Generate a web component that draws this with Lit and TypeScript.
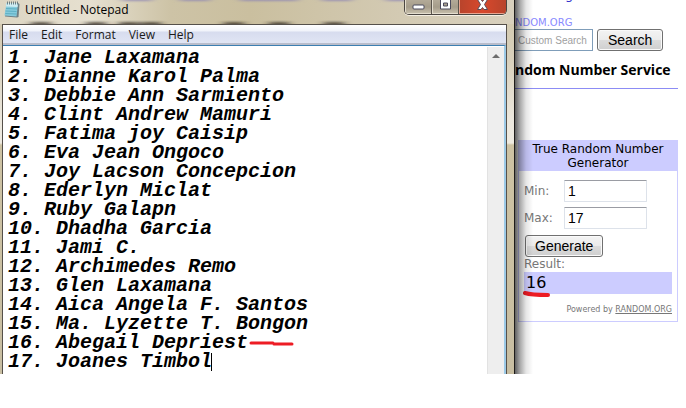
import { LitElement, html, css, svg } from "lit";
import { customElement, state } from "lit/decorators.js";

const NAMES = [
  "Jane Laxamana",
  "Dianne Karol Palma",
  "Debbie Ann Sarmiento",
  "Clint Andrew Mamuri",
  "Fatima joy Caisip",
  "Eva Jean Ongoco",
  "Joy Lacson Concepcion",
  "Ederlyn Miclat",
  "Ruby Galapn",
  "Dhadha Garcia",
  "Jami C.",
  "Archimedes Remo",
  "Glen Laxamana",
  "Aica Angela F. Santos",
  "Ma. Lyzette T. Bongon",
  "Abegail Depriest",
  "Joanes Timbol",
];

@customElement("notepad-window")
export class NotepadWindow extends LitElement {
  static styles = css`
    :host {
      display: block;
      position: relative;
      min-width: 0;
      padding: 0 7px 0 2px;
      background: linear-gradient(#d2c8ac, #d8d0bc 60px, #ece8de 120px, #eeeae0 143px, #cdc2a3 145px, #c8bea2);
      border-right: 1px solid #1e1c1a;
      font-family: "Open Sans", "Noto Sans", sans-serif;
      font-size: 12px;
      color: #000;
    }
    .titlebar {
      position: relative;
      display: flex;
      justify-content: space-between;
      height: 24px;
      margin: 0 -7px 0 -2px;
      overflow: hidden;
      background: linear-gradient(90deg, #ddd6c3, #e6e0d0 90px, #cdc3a6 170px, #cabf9f 250px, #d3cab3 400px, #d8d0bd);
    }
    .ghost {
      position: absolute;
      inset: 0;
      width: 100%;
      height: 24px;
    }
    .name {
      position: relative;
      display: flex;
      gap: 5px;
      padding: 0 4px;
      line-height: 20px;
    }
    .name svg {
      margin-top: 1px;
    }
    .caption {
      position: relative;
      display: flex;
      height: 14px;
      margin-right: 7px;
      border: 1px solid #4b4642;
      border-top: 0;
      border-radius: 0 0 5px 5px;
      box-shadow: 0 1px 0 #f3eee2;
      overflow: hidden;
    }
    .caption button {
      display: grid;
      place-items: center;
      width: 27px;
      height: 14px;
      margin: 0;
      padding: 0 0 4px;
      border: 0;
      border-right: 1px solid #5a544c;
      background: linear-gradient(#b3aa98, #a59c8a 7px, #c9c1ae);
      box-shadow: inset 1px -1px 0 #e4decf;
    }
    .caption .close {
      width: 47px;
      border-right: 0;
      background: linear-gradient(90deg, #b7442c, #d8482c, #b7442c);
      box-shadow: inset 1px -1px 0 #e9a691;
    }
    .client {
      border: 1px solid #55504a;
      border-bottom: 0;
    }
    .menu {
      display: flex;
      gap: 2px;
      height: 18px;
      border-bottom: 2px solid #b9bdcb;
      background: linear-gradient(#fff, #f0f3fa 6px, #d7dcee 7px, #e0e5f4);
    }
    .menu button {
      margin: 0;
      padding: 0 5px 0 6px;
      border: 0;
      background: none;
      font: inherit;
      line-height: 20px;
      color: #1a1a1a;
    }
    .document {
      position: relative;
      display: flex;
      border-top: 1px solid #3c7fb1;
      border-right: 2px solid #9cc9e6;
      background: #fff;
    }
    textarea {
      display: block;
      flex: 1;
      min-width: 0;
      margin: 0;
      padding: 2px 0 3px 5px;
      border: 0;
      outline: 0;
      resize: none;
      overflow: hidden;
      background: #fff;
      color: #000;
      white-space: pre;
      font: italic bold 20px/19px "Liberation Mono", monospace;
    }
    .scroll {
      width: 16px;
      margin-top: 1px;
      border-left: 1px solid #e2e2e2;
      background: #eee;
    }
    .scroll svg {
      display: block;
      margin: 7px auto 0;
    }
    .mark {
      position: absolute;
      left: 246px;
      top: 295px;
    }
    .caret {
      position: absolute;
      left: 208px;
      top: 307px;
      width: 1px;
      height: 18px;
      background: #000;
    }
  `;

  @state() private text = NAMES.map((n, i) => `${i + 1}. ${n}`).join("\n");

  render() {
    return html`
      <div class="titlebar">
        <svg class="ghost" aria-hidden="true">
          <defs>
            <filter id="soft" x="-10%" y="-100%" width="120%" height="300%"><feGaussianBlur stdDeviation="4 1" /></filter>
          </defs>
          <g filter="url(#soft)">
            ${[136, 194, 254, 282, 336, 400].map((x) => svg`<rect x=${x - 14} y="-3" width="30" height="4" fill="#8c84b4" opacity="0.8" />`)}
            ${[40, 95, 128, 150, 233, 278, 333].map((x) => svg`<rect x=${x - 9} y="22" width="20" height="4" fill="#282420" opacity="0.7" />`)}
          </g>
        </svg>
        <div class="name">
          <svg width="16" height="17" viewBox="0 0 16 17" aria-hidden="true">
            <path d="M3 2h11l1.500 1-1 13-1.500.5-12-1z" fill="#6f7f84" />
            <path d="M2.500 2h11.500l-1.500 13.500-12-1z" fill="#86cbdc" />
            <path d="M2.500 2h11.500l-.5 4-11.500-.5z" fill="#cfedf3" />
            <path d="M2 7.500l11 .5M1.500 10l11 .5M1.300 12.500l11 .5" stroke="#5fb0c4" fill="none" />
            <path d="M3.500.5v3M5.500.5v3M7.500.5v3M9.500.5v3M11.500.5v3M13.500.5v3" stroke="#6d7f84" fill="none" />
          </svg>
          <span>Untitled - Notepad</span>
        </div>
        <div class="caption">
          <button aria-label="Minimize">
            <svg width="13" height="10"><rect x="1" y="5" width="11" height="4" rx="1" fill="#fff" stroke="#4b4a5c" /></svg>
          </button>
          <button aria-label="Maximize">
            <svg width="13" height="10"><path d="M1.500-1.500h10v10.500h-10zM4.500 3v3h4v-3z" fill="#fff" fill-rule="evenodd" stroke="#4b4a5c" /></svg>
          </button>
          <button class="close" aria-label="Close">
            <svg width="13" height="10">
              <path d="M1.500-.5h3.500l1.500 2 1.500-2h3.500l-3 5 3 5h-3.500l-1.500-2-1.500 2h-3.500l3-5z" fill="#fff" stroke="#5a4a56" />
            </svg>
          </button>
        </div>
      </div>
      <div class="client">
        <nav class="menu">
          ${["File", "Edit", "Format", "View", "Help"].map((m) => html`<button>${m}</button>`)}
        </nav>
        <div class="document">
          <textarea rows=${NAMES.length} aria-label="Document text" spellcheck="false" .value=${this.text}></textarea>
          <div class="scroll">
            <svg width="8" height="4" aria-hidden="true"><path d="M0 4 4 0 8 4z" fill="#6d6d6d" /></svg>
          </div>
          <svg class="mark" width="46" height="6" aria-hidden="true">
            <path d="M2 2h22M25 3h18" stroke="#ed1c24" stroke-width="3" stroke-linecap="round" />
          </svg>
          <span class="caret"></span>
        </div>
      </div>
    `;
  }
}

@customElement("random-page")
export class RandomPage extends LitElement {
  static styles = css`
    :host {
      display: block;
      position: relative;
      min-width: 0;
      padding-right: 8px;
      overflow: hidden;
      background: #fff;
      font-family: "DejaVu Sans", Verdana, sans-serif;
      color: #000;
    }
    .shade {
      position: absolute;
      inset: 0 auto 0 0;
      width: 18px;
      background: linear-gradient(90deg, rgba(0, 0, 0, 0.62), rgba(0, 0, 0, 0.34) 5px, rgba(0, 0, 0, 0.1) 11px, transparent);
      pointer-events: none;
    }
    .top {
      display: block;
      height: 16px;
      margin-top: -12px;
      padding-left: 50px;
      font-size: 13px;
      line-height: 14px;
      color: #33c;
      text-decoration: none;
    }
    .brand {
      margin-top: 13px;
      font-size: 10px;
      line-height: 12px;
      color: #8a8aff;
    }
    .search {
      display: flex;
      gap: 4px;
    }
    input {
      box-sizing: border-box;
      min-width: 0;
      margin: 0;
      border-radius: 0;
      outline: 0;
      background: #fff;
    }
    .search input {
      width: 78px;
      height: 22px;
      padding: 0 3px;
      border: 1px solid #7f9db9;
      border-left: 0;
      font: 10px "Liberation Sans", sans-serif;
    }
    .search input::placeholder {
      color: #a0a0a0;
      opacity: 1;
    }
    button {
      height: 22px;
      margin: 0;
      padding: 0 10px;
      border: 1px solid #707070;
      border-radius: 3px;
      background: linear-gradient(#f3f3f3, #ebebeb 50%, #dcdcdc 51%, #cfcfcf);
      box-shadow: inset 0 0 0 1px #fafafa;
      font: 14px/18px "Liberation Sans", Arial, sans-serif;
      color: #000;
    }
    .generate {
      margin: 1px 0 0 1px;
      padding: 0 9px;
    }
    h1 {
      margin: 9px 0 0;
      padding-bottom: 8px;
      border-bottom: 1px solid #8c8cf5;
      font: bold 14px/20px "Open Sans", "DejaVu Sans Condensed", sans-serif;
      white-space: nowrap;
    }
    .widget {
      margin: 51px 0 0 3px;
      border: 1px solid #ccf;
    }
    h2 {
      margin: 0;
      padding: 1px 8px;
      background: #ccf;
      font-size: 12px;
      font-weight: normal;
      line-height: 14px;
      text-align: center;
    }
    .body {
      padding: 9px 5px 5px;
      font-size: 12px;
      color: #777;
    }
    .row {
      display: grid;
      grid-template-columns: 40px 83px;
      align-items: center;
      margin-bottom: 5px;
    }
    .row input {
      height: 22px;
      padding: 0 3px;
      border: 1px solid #dde2ea;
      border-top-color: #9a9ca3;
      border-radius: 1px;
      font: 14px "Liberation Sans", sans-serif;
      color: #000;
    }
    .label {
      display: block;
      line-height: 15px;
    }
    .result {
      position: relative;
      display: block;
      padding-left: 2px;
      background: #ccf;
      font-size: 16px;
      line-height: 22px;
      color: #000;
    }
    .mark {
      position: absolute;
      left: -1px;
      top: 18px;
    }
    .powered {
      margin: 10px 0 0;
      font-size: 8px;
      line-height: 12px;
      text-align: right;
    }
    .powered a {
      color: inherit;
    }
  `;

  render() {
    return html`
      <a class="top" href="#">g</a>
      <div class="brand">NDOM.ORG</div>
      <form class="search" @submit=${(e: Event) => e.preventDefault()}>
        <input type="text" aria-label="Custom Search" placeholder="Custom Search" />
        <button>Search</button>
      </form>
      <h1>ndom Number Service</h1>
      <section class="widget">
        <h2>True Random Number Generator</h2>
        <div class="body">
          <div class="row"><label for="min">Min:</label><input id="min" type="text" .value=${"1"} /></div>
          <div class="row"><label for="max">Max:</label><input id="max" type="text" .value=${"17"} /></div>
          <button class="generate">Generate</button>
          <label class="label" for="result">Result:</label>
          <output class="result" id="result">16<svg class="mark" width="28" height="8" aria-hidden="true">
              <path d="M2 3C8 5 20 5 25 5" fill="none" stroke="#ed1c24" stroke-width="4" stroke-linecap="round" />
            </svg></output>
          <p class="powered">Powered by <a href="#">RANDOM.ORG</a></p>
        </div>
      </section>
      <div class="shade"></div>
    `;
  }
}

@customElement("app-root")
export class AppRoot extends LitElement {
  static styles = css`
    :host {
      display: grid;
      grid-template-columns: minmax(0, 515fr) minmax(0, 171fr);
      background: #fff;
    }
  `;

  render() {
    return html`<notepad-window></notepad-window><random-page></random-page>`;
  }
}
